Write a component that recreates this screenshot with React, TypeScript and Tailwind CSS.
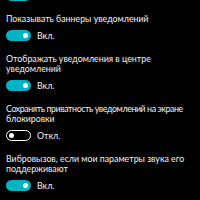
import React from 'react'

type Setting = {
    lines: string[]
    on: boolean
    tight?: boolean
}

const settings: Setting[] = [
    { lines: ['Показывать баннеры уведомлений'], on: true },
    { lines: ['Отображать уведомления в центре', 'уведомлений'], on: true },
    { lines: ['Сохранять приватность уведомлений на экране', 'блокировки'], on: false, tight: true },
    { lines: ['Вибровызов, если мои параметры звука его', 'поддерживают'], on: true },
]

function Toggle({ on }: { on: boolean }) {
    return on ? (
        <div className="flex h-[11px] w-[25px] items-center justify-end rounded-full bg-[#00b4c4] pr-[3px]">
            <div className="h-[5px] w-[5px] rounded-full bg-white" />
        </div>
    ) : (
        <div className="flex h-[11px] w-[25px] items-center rounded-full border border-white pl-[2px]">
            <div className="h-[5px] w-[5px] rounded-full bg-white" />
        </div>
    )
}

function SettingRow({ lines, on, tight }: Setting) {
    return (
        <div className="flex flex-col">
            {lines.map((line, i) => (
                <div
                    key={line}
                    className={
                        tight && i === 0
                            ? 'whitespace-nowrap text-[8.8px] leading-[10px] tracking-[-0.4px] text-[#f2f2f2]'
                            : 'whitespace-nowrap text-[8.8px] leading-[10px] text-[#f2f2f2]'
                    }
                >
                    {line}
                </div>
            ))}
            <div className="mt-[6px] flex items-center gap-[6px]">
                <Toggle on={on} />
                <span className="text-[8.8px] leading-[10px] text-[#f2f2f2]">{on ? 'Вкл.' : 'Откл.'}</span>
            </div>
        </div>
    )
}

export default function App() {
    return (
        <div
            className="h-[200px] w-[200px] overflow-hidden bg-black px-[6px]"
            style={{ fontFamily: 'Lato, "Open Sans", sans-serif' }}
        >
            <div className="-mt-[10px] flex h-[11px]">
                <Toggle on={true} />
            </div>
            <div className="mt-[13px] flex flex-col gap-[13px]">
                {settings.map((s) => (
                    <SettingRow key={s.lines[0]} {...s} />
                ))}
            </div>
        </div>
    )
}
